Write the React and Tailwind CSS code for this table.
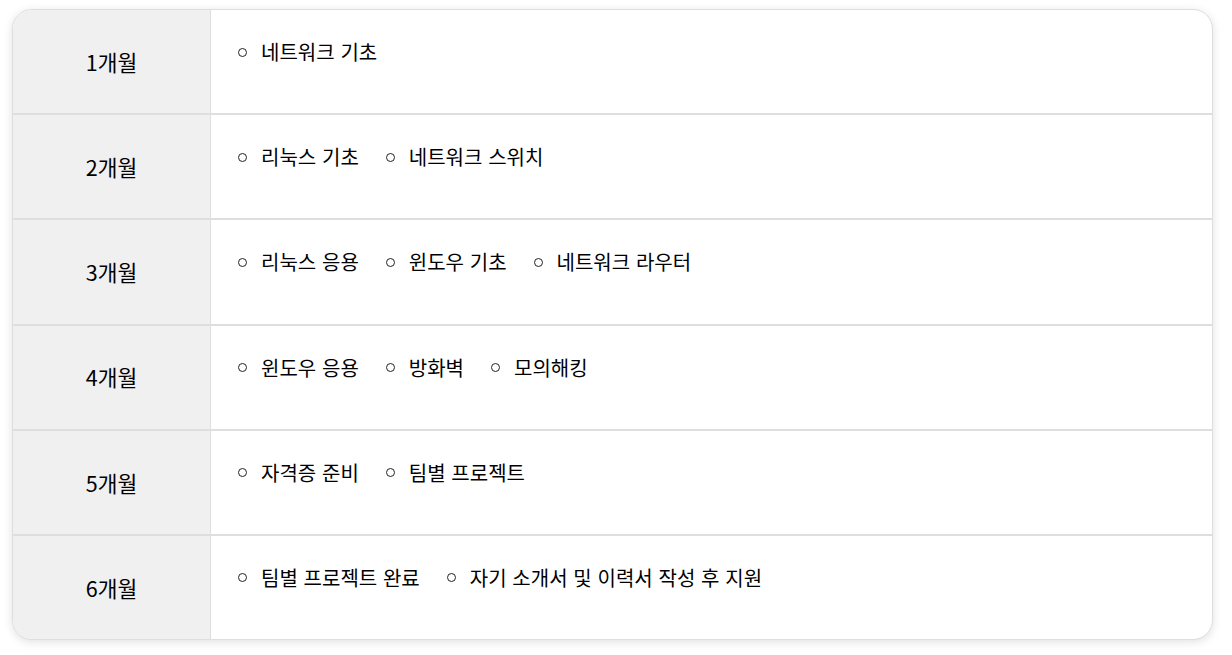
import React from "react";

const rows = [
  { month: "1개월", items: ["네트워크 기초"] },
  { month: "2개월", items: ["리눅스 기초", "네트워크 스위치"] },
  { month: "3개월", items: ["리눅스 응용", "윈도우 기초", "네트워크 라우터"] },
  { month: "4개월", items: ["윈도우 응용", "방화벽", "모의해킹"] },
  { month: "5개월", items: ["자격증 준비", "팀별 프로젝트"] },
  { month: "6개월", items: ["팀별 프로젝트 완료", "자기 소개서 및 이력서 작성 후 지원"] },
];

export default function App() {
  return (
    <div
      className="w-[1232px] h-[655px] bg-white pt-[9px] pl-[12px]"
      style={{ fontFamily: '"Noto Sans CJK KR", "Noto Sans", sans-serif' }}
    >
      <div className="w-[1201px] h-[631px] rounded-[20px] border border-[#dedede] overflow-hidden bg-white shadow-[0_2px_10px_rgba(0,0,0,0.12)] flex flex-col">
        {rows.map((r, i) => (
          <div
            key={r.month}
            className={
              "flex flex-1 " + (i > 0 ? "border-t-2 border-[#dedede]" : "")
            }
          >
            <div className="w-[198px] shrink-0 bg-[#f0f0f0] border-r border-[#dedede] flex items-center justify-center text-[21.5px] text-black pt-[1px]">
              {r.month}
            </div>
            <div className="flex-1 pt-[28px] pl-[27px]">
              <ul className="flex items-center gap-[27px] text-[20px] leading-[28px] text-black [word-spacing:1.3px]">
                {r.items.map((it) => (
                  <li key={it} className="flex items-center gap-[14px]">
                    <span className="w-[9px] h-[9px] rounded-full border border-[#222] shrink-0" />
                    <span>{it}</span>
                  </li>
                ))}
              </ul>
            </div>
          </div>
        ))}
      </div>
    </div>
  );
}
